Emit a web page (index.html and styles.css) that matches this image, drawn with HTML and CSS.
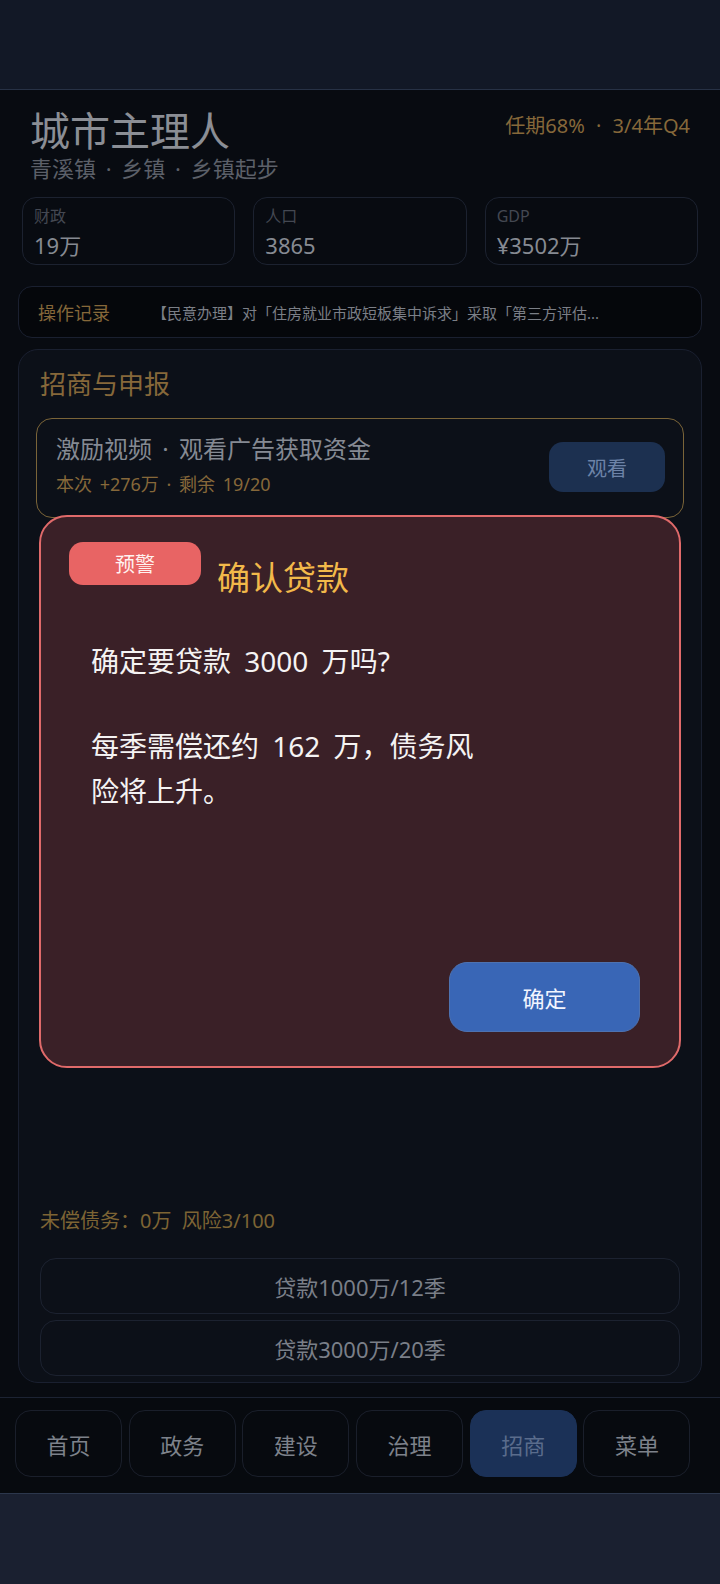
FILE: index.html
```html
<!DOCTYPE html>
<html lang="zh-CN">
<head>
  <meta charset="UTF-8">
  <title>城市主理人</title>
  <link rel="stylesheet" href="styles.css">
</head>
<body>

  <div class="topbar"></div>

  <div class="app">
    <!-- Header -->
    <div class="header">
      <div>
        <h1 class="title">城市主理人</h1>
        <div class="subtitle">青溪镇 · 乡镇 · 乡镇起步</div>
      </div>
      <div class="term">任期68% · 3/4年Q4</div>
    </div>

    <!-- Stats -->
    <div class="stats">
      <div class="stat">
        <div class="stat-label">财政</div>
        <div class="stat-value">19万</div>
      </div>
      <div class="stat">
        <div class="stat-label">人口</div>
        <div class="stat-value">3865</div>
      </div>
      <div class="stat">
        <div class="stat-label">GDP</div>
        <div class="stat-value">¥3502万</div>
      </div>
    </div>

    <!-- Log -->
    <div class="log">
      <span class="log-label">操作记录</span>
      <span class="log-text">【民意办理】对「住房就业市政短板集中诉求」采取「第三方评估...</span>
    </div>

    <!-- Investment panel -->
    <div class="panel">
      <h2 class="panel-title">招商与申报</h2>

      <div class="ad-row">
        <div class="ad-info">
          <div class="ad-title">激励视频 · 观看广告获取资金</div>
          <div class="ad-sub">本次 +276万 · 剩余 19/20</div>
        </div>
        <button class="ad-btn">观看</button>
      </div>

      <div class="filler"></div>

      <div class="debt">未偿债务：0万&nbsp;&nbsp;风险3/100</div>
      <button class="loan-btn">贷款1000万/12季</button>
      <button class="loan-btn">贷款3000万/20季</button>
    </div>

    <!-- Tabs -->
    <div class="tabs">
      <div class="tab">首页</div>
      <div class="tab">政务</div>
      <div class="tab">建设</div>
      <div class="tab">治理</div>
      <div class="tab active">招商</div>
      <div class="tab">菜单</div>
    </div>

    <!-- Confirm dialog -->
    <div class="modal">
      <div class="modal-head">
        <span class="badge">预警</span>
        <span class="modal-title">确认贷款</span>
      </div>
      <div class="modal-text">
        <p>确定要贷款 3000 万吗?</p>
        <p>每季需偿还约 162 万，债务风险将上升。</p>
      </div>
      <div class="modal-actions">
        <button class="confirm-btn">确定</button>
      </div>
    </div>
  </div>

  <div class="bottombar"></div>

</body>
</html>
```

FILE: styles.css
```css
* {
  box-sizing: border-box;
}

body {
  margin: 0;
  font-family: "Noto Sans", "Noto Sans CJK SC", sans-serif;
  background-color: #1a2030;
}

h1, h2, p {
  margin: 0;
  font-weight: normal;
}

button {
  font-family: inherit;
  cursor: pointer;
}

.topbar {
  height: 90px;
  background-color: #121826;
  border-bottom: 1px solid #273145;
}

.app {
  position: relative;
  height: 1404px;
  display: flex;
  flex-direction: column;
  background-color: #080b11;
  border-bottom: 1px solid #2c374c;
}

.bottombar {
  height: 90px;
  background-color: #1a2030;
}

/* header */
.header {
  display: flex;
  justify-content: space-between;
  align-items: flex-start;
  padding: 18px 30px 0;
}

.title {
  font-size: 40px;
  line-height: 46px;
  color: #8b8e95;
}

.subtitle {
  font-size: 22px;
  line-height: 28px;
  color: #5c6069;
  word-spacing: 4px;
}

.term {
  margin-top: 5px;
  font-size: 20px;
  line-height: 26px;
  color: #86683a;
  word-spacing: 6px;
}

/* stats */
.stats {
  display: flex;
  gap: 18px;
  padding: 0 22px;
  margin-top: 15px;
}

.stat {
  flex: 1;
  height: 68px;
  padding: 8px 11px 0;
  border: 1px solid #1c2230;
  border-radius: 14px;
}

.stat-label {
  font-size: 16px;
  line-height: 20px;
  color: #444852;
}

.stat-value {
  margin-top: 6px;
  font-size: 22px;
  line-height: 26px;
  color: #868a92;
}

/* log */
.log {
  display: flex;
  align-items: center;
  height: 52px;
  margin: 21px 18px 0;
  padding: 0 19px;
  background-color: #05070b;
  border: 1px solid #1a2030;
  border-radius: 14px;
}

.log-label {
  width: 114px;
  flex-shrink: 0;
  font-size: 18px;
  color: #86683a;
}

.log-text {
  font-size: 15px;
  color: #7b7f87;
  white-space: nowrap;
}

/* panel */
.panel {
  flex: 1;
  display: flex;
  flex-direction: column;
  margin: 11px 18px 14px;
  padding: 17px 17px 6px;
  background-color: #0c1018;
  border: 1px solid #1a2030;
  border-radius: 20px;
}

.panel-title {
  padding-left: 4px;
  font-size: 26px;
  line-height: 34px;
  color: #86683a;
}

.ad-row {
  display: flex;
  align-items: center;
  justify-content: space-between;
  height: 100px;
  margin-top: 17px;
  padding: 0 18px 7px 19px;
  border: 1.5px solid #7a6438;
  border-radius: 16px;
}

.ad-title {
  font-size: 24px;
  line-height: 30px;
  color: #858a93;
  word-spacing: 4px;
}

.ad-sub {
  margin-top: 8px;
  font-size: 18px;
  line-height: 24px;
  color: #86683a;
  word-spacing: 3px;
}

.ad-btn {
  width: 116px;
  height: 50px;
  margin-top: 5px;
  border: none;
  border-radius: 14px;
  background-color: #1c3050;
  color: #6d83a8;
  font-size: 20px;
}

.filler {
  flex: 1;
}

.debt {
  padding-left: 4px;
  font-size: 20px;
  line-height: 26px;
  color: #7d6434;
  margin-bottom: 24px;
}

.loan-btn {
  height: 56px;
  margin: 0 4px 6px;
  border: 1.5px solid #1c2230;
  border-radius: 16px;
  background: transparent;
  color: #7a7f88;
  font-size: 22px;
}

.loan-btn:last-child {
  margin-bottom: 0;
}

/* tabs */
.tabs {
  display: flex;
  gap: 6.7px;
  padding: 12px 0 16px 15px;
  background-color: #070a0f;
  border-top: 1px solid #1c2333;
}

.tab {
  width: 107px;
  height: 67px;
  display: flex;
  align-items: center;
  justify-content: center;
  border: 1.5px solid #1a1f2b;
  border-radius: 16px;
  font-size: 22px;
  color: #7d828b;
}

.tab.active {
  background-color: #1b3157;
  border-color: #1b3157;
  color: #5a6c8c;
}

/* modal */
.modal {
  position: absolute;
  top: 425px;
  left: 39px;
  width: 642px;
  height: 553px;
  display: flex;
  flex-direction: column;
  padding: 25px 39px 34px 28px;
  background-color: #3a2027;
  border: 2px solid #e06a6a;
  border-radius: 28px;
}

.modal-head {
  display: flex;
  align-items: flex-start;
  gap: 16px;
}

.badge {
  width: 132px;
  height: 43px;
  display: flex;
  align-items: center;
  justify-content: center;
  background-color: #e86464;
  border-radius: 14px;
  color: #fff2f0;
  font-size: 20px;
}

.modal-title {
  margin-top: 15px;
  font-size: 33px;
  line-height: 42px;
  color: #f2b94a;
}

.modal-text {
  width: 400px;
  margin: 40px 0 0 22px;
  color: #f5f3f3;
  font-size: 28px;
  line-height: 45px;
  word-spacing: 6px;
}

.modal-text p + p {
  margin-top: 40px;
}

.modal-actions {
  flex: 1;
  display: flex;
  justify-content: flex-end;
  align-items: flex-end;
}

.confirm-btn {
  width: 191px;
  height: 70px;
  border: 1.5px solid #4e72b0;
  border-radius: 18px;
  background-color: #3966b6;
  color: #f2f5ff;
  font-size: 22px;
}
```
